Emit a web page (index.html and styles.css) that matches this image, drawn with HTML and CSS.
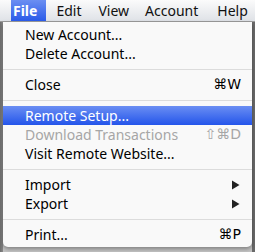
FILE: index.html
```html
<!DOCTYPE html>
<html lang="en">
<head>
    <meta charset="UTF-8">
    <title>File Menu</title>
    <link rel="stylesheet" href="styles.css">
</head>
<body>
    <div class="menubar">
        <span class="bar-item bar-file active">File</span>
        <span class="bar-item bar-edit">Edit</span>
        <span class="bar-item bar-view">View</span>
        <span class="bar-item bar-account">Account</span>
        <span class="bar-item bar-help">Help</span>
    </div>
    <div class="menu">
        <div class="item">New Account...</div>
        <div class="item">Delete Account...</div>
        <div class="sep"></div>
        <div class="item">Close <span class="key">&#8984;W</span></div>
        <div class="sep"></div>
        <div class="item selected">Remote Setup...</div>
        <div class="item disabled">Download Transactions <span class="key">&#8679;&#8984;D</span></div>
        <div class="item">Visit Remote Website...</div>
        <div class="sep"></div>
        <div class="item">Import
            <svg class="arrow" width="8" height="10" viewBox="0 0 8 10"><path d="M0 0.5 L7.5 5 L0 9.5 Z" fill="#222"/></svg>
        </div>
        <div class="item">Export
            <svg class="arrow" width="8" height="10" viewBox="0 0 8 10"><path d="M0 0.5 L7.5 5 L0 9.5 Z" fill="#222"/></svg>
        </div>
        <div class="sep"></div>
        <div class="item">Print... <span class="key">&#8984;P</span></div>
    </div>
</body>
</html>
```

FILE: styles.css
```css
body {
    margin: 0;
    background: linear-gradient(to right, #6e6e6e 0px, #8a8a8a 3px, #c4c4c4 3px, #c4c4c4 252px, #6a6a6a 252px);
    font-family: "Noto Sans", sans-serif;
    font-size: 14px;
    height: 252px;
    overflow: hidden;
}
.menubar {
    display: flex;
    height: 21px;
    line-height: 21px;
    background: linear-gradient(#fbfbfb, #dfe2e7);
    border-bottom: 1px solid #9c9c9c;
    color: #111;
}
.bar-item { padding: 0 9px; }
.bar-file { margin-left: 11px; padding: 0 9px 0 2px; font-weight: bold; }
.bar-edit { margin-left: 1px; }
.bar-view { margin-left: -1px; }
.bar-account { margin-left: -2px; }
.bar-help { margin-left: 1px; }
.active {
    background: linear-gradient(#6b8ff2, #2a5ae8);
    color: #fff;
}
.menu {
    margin: 0 3px;
    width: 249px;
    padding: 3px 0;
    background: #f9f9f9;
    border-radius: 0 0 5px 5px;
    box-shadow: 0 2px 4px rgba(0, 0, 0, 0.35);
    color: #000;
}
.item {
    display: flex;
    justify-content: space-between;
    align-items: center;
    height: 19px;
    line-height: 19px;
    padding: 0 11px 0 22px;
    white-space: nowrap;
}
.selected {
    background: linear-gradient(#6a8ef3, #2455ea);
    color: #fff;
}
.disabled { color: #a6a6a6; }
.key { font-family: "DejaVu Sans", sans-serif; font-size: 14px; }
.arrow { margin-right: 1px; }
.sep {
    height: 12px;
    display: flex;
    align-items: center;
}
.sep::before {
    content: "";
    flex: 1;
    height: 1px;
    background: #dcdcdc;
}
```
